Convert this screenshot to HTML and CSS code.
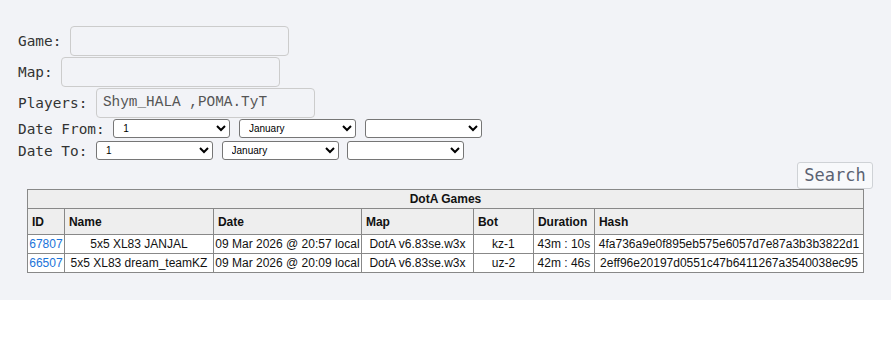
FILE: index.html
```html
<!DOCTYPE html>
<html lang="en">
<head>
    <meta charset="UTF-8">
    <meta name="viewport" content="width=device-width, initial-scale=1.0">
    <title>DotA Games</title>
    <link rel="stylesheet" href="styles.css">
</head>
<body>
    <div class="page">
    <form class="search-form">
        <div class="field">
            <label for="game">Game:</label>
            <input type="text" id="game">
        </div>
        <div class="field">
            <label for="map">Map:</label>
            <input type="text" id="map">
        </div>
        <div class="field">
            <label for="players">Players:</label>
            <input type="text" id="players" value="Shym_HALA ,POMA.TyT">
        </div>
        <div class="date-row">
            <label>Date From:</label>
            <select><option>1</option></select>
            <select><option>January</option></select>
            <select><option></option></select>
        </div>
        <div class="date-row">
            <label>Date To:</label>
            <select><option>1</option></select>
            <select><option>January</option></select>
            <select><option></option></select>
        </div>
        <div class="actions">
            <button type="button" class="search-btn">Search</button>
        </div>
    </form>

    <table class="games">
        <colgroup>
            <col style="width: 37px">
            <col style="width: 149px">
            <col style="width: 148px">
            <col style="width: 112px">
            <col style="width: 60px">
            <col style="width: 61px">
            <col style="width: 269px">
        </colgroup>
        <thead>
            <tr><th colspan="7" class="title">DotA Games</th></tr>
            <tr>
                <th>ID</th>
                <th>Name</th>
                <th>Date</th>
                <th>Map</th>
                <th>Bot</th>
                <th>Duration</th>
                <th>Hash</th>
            </tr>
        </thead>
        <tbody>
            <tr>
                <td><a href="#">67807</a></td>
                <td>5x5 XL83 JANJAL</td>
                <td>09 Mar 2026 @ 20:57 local</td>
                <td>DotA v6.83se.w3x</td>
                <td>kz-1</td>
                <td>43m : 10s</td>
                <td>4fa736a9e0f895eb575e6057d7e87a3b3b3822d1</td>
            </tr>
            <tr>
                <td><a href="#">66507</a></td>
                <td>5x5 XL83 dream_teamKZ</td>
                <td>09 Mar 2026 @ 20:09 local</td>
                <td>DotA v6.83se.w3x</td>
                <td>uz-2</td>
                <td>42m : 46s</td>
                <td>2eff96e20197d0551c47b6411267a3540038ec95</td>
            </tr>
        </tbody>
    </table>
    </div>
</body>
</html>
```

FILE: styles.css
```css
*{
    box-sizing: border-box;
}
body{
    margin: 0;
    background-color: #fff;
}
.page{
    background-color: #f2f3f7;
    padding: 26px 18px 27px;
}
.search-form{
    font-family: "DejaVu Sans Mono", monospace;
    font-size: 14.4px;
    color: #333;
}
.field{
    height: 30.7px;
    display: flex;
    align-items: center;
    gap: 0.6em;
}
.field input{
    width: 219px;
    height: 30px;
    margin: 0;
    padding: 3px 6px 5px;
    line-height: 20px;
    border: 1px solid #cccccc;
    border-radius: 4px;
    background-color: transparent;
    font-family: "Liberation Mono", "DejaVu Sans Mono", monospace;
    font-size: 14.4px;
    color: #555;
}
.date-row{
    height: 21.8px;
    display: flex;
    align-items: center;
    gap: 0.6em;
}
.date-row select{
    width: 117px;
    height: 19px;
    margin: 0;
    padding: 0 0 0 5px;
    font-family: "Liberation Sans", Arial, sans-serif;
    font-size: 10px;
    color: #000;
    background-color: #fff;
    border: 1px solid #767676;
    border-radius: 3px;
}
.actions{
    display: flex;
    justify-content: flex-end;
}
.search-btn{
    width: 76px;
    height: 27px;
    padding: 0;
    font-family: "DejaVu Sans Mono", monospace;
    font-size: 17px;
    color: #5b6272;
    background-color: #f8f9fb;
    border: 1px solid #cfd2d6;
    border-radius: 3px;
}
.games{
    width: 836px;
    margin: 0 auto;
    table-layout: fixed;
    border-collapse: collapse;
    border: 1px solid #888;
    font-family: "Liberation Sans", Arial, sans-serif;
    font-size: 12px;
    line-height: 14px;
    color: #111;
}
.games th{
    background-color: #eeeeee;
    border: 1px solid #888;
    padding: 6px 4px 5px;
    text-align: left;
    font-weight: bold;
    white-space: nowrap;
}
.games th.title{
    padding: 2px 4px;
    text-align: center;
}
.games td{
    background-color: #fff;
    border: 1px solid #888;
    padding: 2px 1px;
    text-align: center;
    white-space: nowrap;
}
.games a{
    color: #1a73d9;
    text-decoration: none;
}
```
